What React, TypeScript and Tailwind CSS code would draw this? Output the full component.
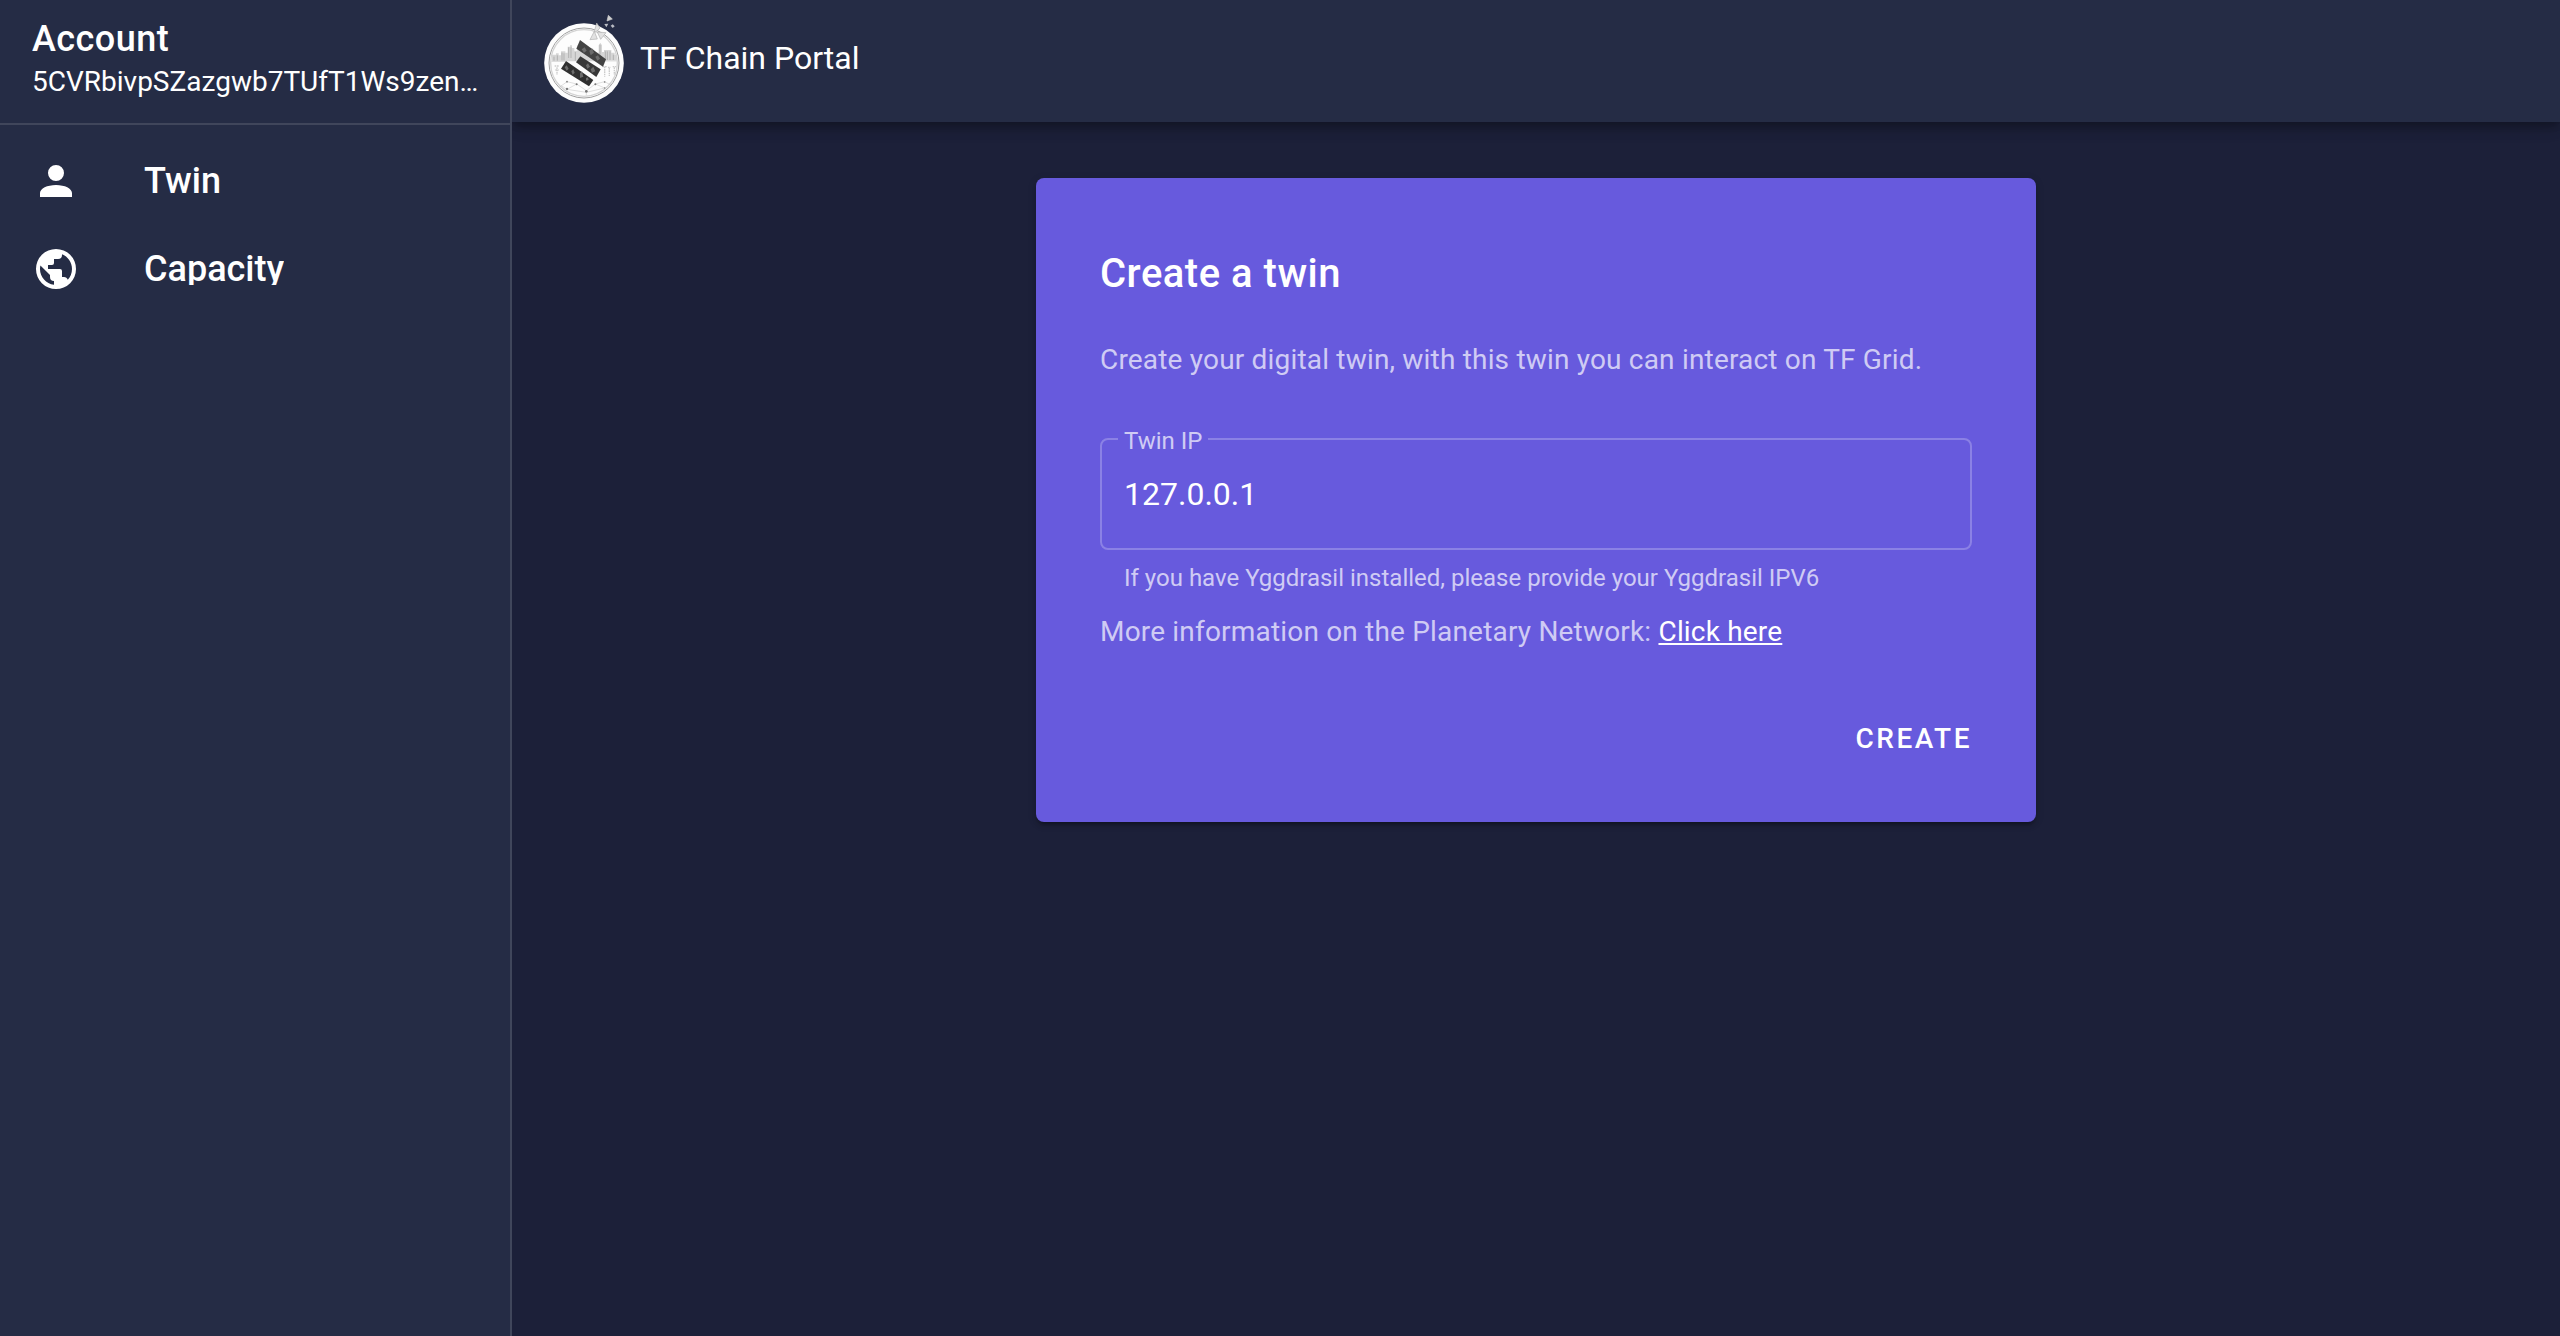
import React from "react";

const ACCOUNT_PATH =
  "M12,4A4,4 0 0,1 16,8A4,4 0 0,1 12,12A4,4 0 0,1 8,8A4,4 0 0,1 12,4M12,14C16.42,14 20,15.79 20,18V20H4V18C4,15.79 7.58,14 12,14Z";
const EARTH_PATH =
  "M17.9,17.39C17.64,16.59 16.89,16 16,16H15V13A1,1 0 0,0 14,12H8V10H10A1,1 0 0,0 11,9V7H13A2,2 0 0,0 15,5V4.59C17.93,5.77 20,8.64 20,12C20,14.08 19.2,15.97 17.9,17.39M11,19.93C7.05,19.44 4,16.08 4,12C4,11.38 4.08,10.78 4.21,10.21L9,15V16A2,2 0 0,0 11,18M12,2A10,10 0 0,0 2,12A10,10 0 0,0 12,22A10,10 0 0,0 22,12A10,10 0 0,0 12,2Z";

function NavItem({ label, path }: { label: string; path: string }) {
  return (
    <a className="flex h-20 items-center px-8">
      <svg viewBox="0 0 24 24" className="mr-16 size-12 shrink-0 fill-white">
        <path d={path} />
      </svg>
      <span className="overflow-hidden text-[36px] leading-8 font-medium">{label}</span>
    </a>
  );
}

function Sidebar() {
  return (
    <aside className="z-10 flex w-[512px] shrink-0 flex-col border-r-2 border-[#40465b] bg-[#252c45]">
      <div className="h-[123px] px-8 pt-[15px]">
        <div className="text-[36px] leading-[48px] font-medium tracking-[0.0125em]">Account</div>
        <div className="pt-px text-[28px] leading-9 whitespace-nowrap">
          5CVRbivpSZazgwb7TUfT1Ws9zen…
        </div>
      </div>
      <div className="h-0.5 bg-[#40465b]" />
      <nav className="flex flex-col gap-2 pt-4">
        <NavItem label="Twin" path={ACCOUNT_PATH} />
        <NavItem label="Capacity" path={EARTH_PATH} />
      </nav>
    </aside>
  );
}

function Logo() {
  return (
    <svg viewBox="0 0 300 300" className="size-[100px] shrink-0">
      <circle cx="150" cy="165" r="119.5" fill="#fdfdfd" />
      <circle cx="150" cy="165" r="105" fill="none" stroke="#a0a0a0" strokeWidth="3" />
      <circle cx="150" cy="165" r="100" fill="none" stroke="#d4d4d4" strokeWidth="4" />
      {/* skyline */}
      <path
        d="M54 160V140H66V136H74V142H81V130H94V134H101V116H108V112H114V120H121V128H130V112H140L160 120H175L186 134H194V112L199 104L204 112V132H210V126H232V134H242V140H248V160Z"
        fill="#d6d6d6"
      />
      <path
        d="M60 160V146M70 160V142M84 158V134M90 158V136M104 150V118M111 150V118M124 158V132M198 140V110M214 158V130M220 158V130M228 158V130M238 158V140"
        stroke="#a9a9a9"
        strokeWidth="2.5"
      />
      <path d="M52 160H96M214 158H248" stroke="#dedede" strokeWidth="4" />
      {/* trees and people */}
      <path
        d="M62 174H76M69 178V200M64 186H74M206 176H218M212 176V206M222 178H230M226 180V204M236 176H246M241 178V200"
        stroke="#cccccc"
        strokeWidth="4"
        strokeDasharray="5 2"
      />
      {/* network */}
      <path
        d="M76 238L99 221L128 228L157 248L184 228L212 221M99 244L128 228M99 244L157 253L212 240L184 228M157 248V262M80 232L99 244M212 221L232 232"
        fill="none"
        stroke="#c0c0c0"
        strokeWidth="1.5"
      />
      <g fill="#777777">
        <circle cx="99" cy="221" r="2.5" />
        <circle cx="99" cy="243" r="3.5" />
        <circle cx="128" cy="229" r="3" />
        <circle cx="157" cy="250" r="4" />
        <circle cx="184" cy="229" r="3" />
        <circle cx="212" cy="222" r="2.5" />
        <circle cx="212" cy="240" r="2" />
      </g>
      {/* slanted bars */}
      <path d="M138 96L216 154L207 176L127 122Z" fill="#434343" />
      <path d="M139 145L200 184L187 207L126 163Z" fill="#383838" />
      <path d="M96 159L178 216L165 235L81 182Z" fill="#303030" />
      <g fill="#6c6c6c">
        <path d="M143 124L152 118L158 128L150 134ZM166 128L174 122L180 134L170 142ZM184 146L192 142L198 152L190 158ZM156 172L162 166L168 176L160 182ZM170 184L178 176L184 190L174 194ZM92 178L98 172L104 182L98 188ZM112 190L118 184L122 194L116 200ZM138 196L144 190L148 206L138 210ZM156 210L162 208L164 216L156 218Z" />
      </g>
      {/* shards leaving the coin */}
      <g fill="#e2e2e2" stroke="#b0b0b0" strokeWidth="2">
        <path d="M180 74L188 45L198 60L190 68Z" />
        <path d="M168 95L181 70L190 93Z" />
        <path d="M190 72L216 74L200 94Z" />
      </g>
      <path d="M223 22L235 33L219 39Z" fill="#cfcfcf" stroke="#cfcfcf" strokeWidth="2" />
      <path d="M211 48L223 47L217 58Z" fill="#b9bcc4" />
      <path d="M230 53L236 49L242 55L236 60Z" fill="#b9bcc4" />
    </svg>
  );
}

function AppBar() {
  return (
    <header className="flex h-[122px] shrink-0 items-start gap-1.5 bg-[#252c45] pt-2 pl-[22px] shadow-[0_4px_8px_-2px_rgba(0,0,0,0.2),0_8px_10px_0_rgba(0,0,0,0.14),0_2px_20px_0_rgba(0,0,0,0.12)]">
      <Logo />
      <div className="pt-[26px] text-[32px] leading-[48px]">TF Chain Portal</div>
    </header>
  );
}

function TwinCard() {
  return (
    <section className="flex h-[644px] w-[1000px] flex-col rounded-lg bg-[#675add] px-16 pt-16 shadow-[0_6px_2px_-4px_rgba(0,0,0,0.2),0_4px_4px_0_rgba(0,0,0,0.14),0_2px_10px_0_rgba(0,0,0,0.12)]">
      <h1 className="text-[40px] leading-[64px] font-medium tracking-[0.0125em]">Create a twin</h1>
      <p className="mt-8 text-[28px] leading-[44px] tracking-[0.0066em] text-white/70">
        Create your digital twin, with this twin you can interact on TF Grid.
      </p>
      <div className="relative mt-14 h-28 rounded-lg border-2 border-white/24 px-[22px] pt-8">
        <label className="absolute -top-[13px] left-4 w-[90px] bg-[#675add] pl-1.5 text-[24px] leading-7 whitespace-nowrap">
          <span className="text-white/70">Twin IP</span>
        </label>
        <div className="text-[32px] leading-[44px]">127.0.0.1</div>
      </div>
      <div className="mt-4 px-6 text-[24px] leading-6 text-white/70">
        If you have Yggdrasil installed, please provide your Yggdrasil IPV6
      </div>
      <p className="mt-5 text-[28px] leading-[44px] tracking-[0.0066em] text-white/70">
        More information on the Planetary Network:{" "}
        <a className="text-white underline">Click here</a>
      </p>
      <button className="mt-[49px] h-[72px] self-end text-[28px] font-medium tracking-[0.0892857143em]">
        CREATE
      </button>
    </section>
  );
}

export default function App() {
  return (
    <div className="flex h-[1336px] w-[2560px] overflow-hidden bg-[#1c2039] font-[Roboto,sans-serif] text-white">
      <Sidebar />
      <div className="flex flex-1 flex-col">
        <AppBar />
        <main className="flex justify-center pt-14">
          <TwinCard />
        </main>
      </div>
    </div>
  );
}
